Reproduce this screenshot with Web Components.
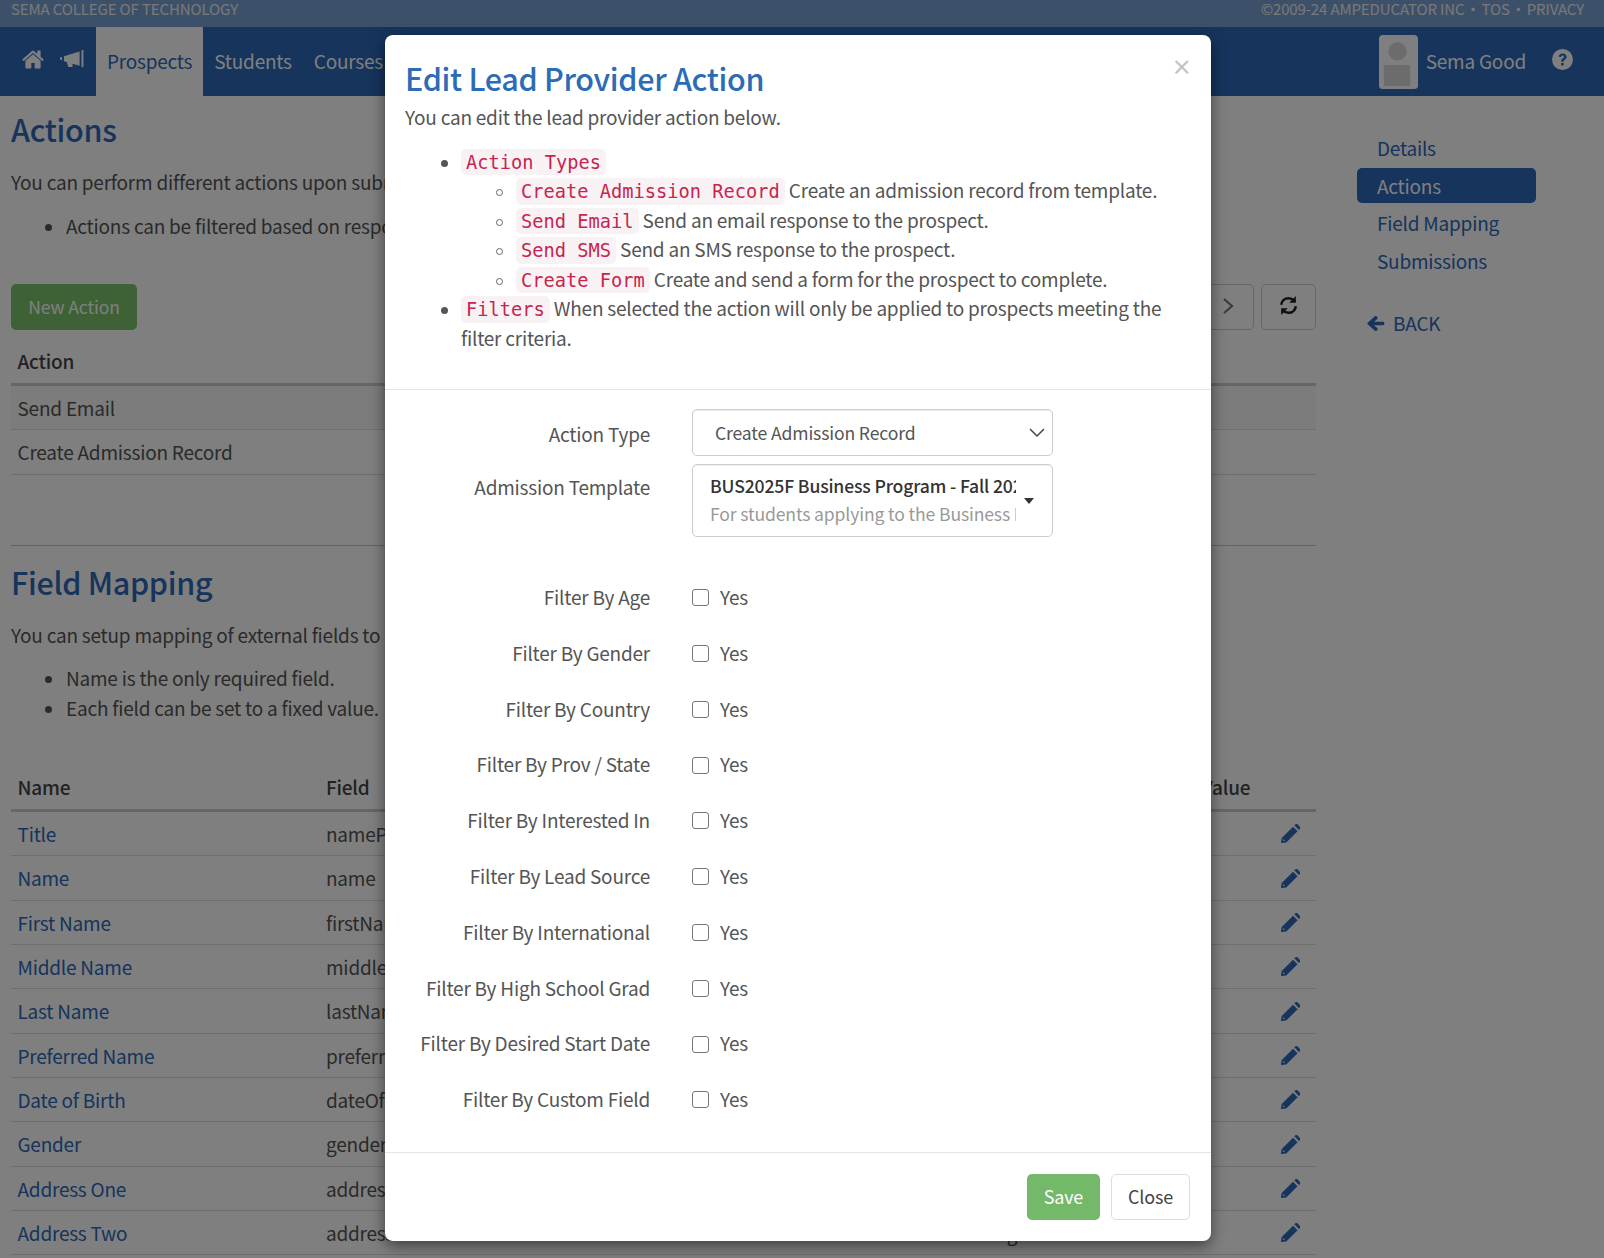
<!DOCTYPE html>
<html><head><meta charset="utf-8">
<style>
html,body{margin:0;padding:0;height:1258px;overflow:hidden;background:#fff}
body{font:400 19px/29.5px "Noto Sans CJK SC","Noto Sans",sans-serif;letter-spacing:-.22px;color:#555;position:relative;width:1604px}
</style></head><body>
<app-shell></app-shell>
<script>
const I={
home:'<svg viewBox="0 0 1664 1792" width="22" height="25" preserveAspectRatio="none" fill="currentColor"><path d="M1408 992v480q0 26-19 45t-45 19H960v-384H704v384H320q-26 0-45-19t-19-45V992q0-1 .5-3t.5-3l575-474 575 474q1 2 1 6zm223-69l-62 74q-8 9-21 11h-3q-13 0-21-7L832 424 140 1001q-12 8-24 7-13-2-21-11l-62-74q-8-10-7-23.5T37 878L756 279q32-26 76-26t76 26l244 204V288q0-14 9-23t23-9h192q14 0 23 9t9 23v408l219 182q10 8 11 21.5t-7 23.5z"/></svg>',
horn:'<svg viewBox="0 0 26 20" width="25" height="19" fill="currentColor"><rect x="0" y="7.500" width="2" height="3"/><path d="M4 6.500 20.500 1.500v15L13 14.600V18H8.500L7 12.500 4 11.800z"/><rect x="22.500" y="0" width="2" height="18"/></svg>',
help:'<svg viewBox="0 0 20 20" width="21" height="21"><circle cx="10" cy="10" r="10" fill="currentColor"/><path d="M6.400 7.400C6.700 5.400 8.200 4.300 10.200 4.300c2.100 0 3.700 1.300 3.700 3.100 0 1.400-.8 2.100-1.800 2.800-.8.600-1.100 1-1.100 1.900H8.800c0-1.500.4-2.200 1.400-3 .8-.6 1.200-1 1.200-1.600 0-.7-.6-1.200-1.300-1.200-.8 0-1.300.5-1.500 1.400z" fill="#2c68b8"/><rect x="8.700" y="13.300" width="2.400" height="2.400" fill="#2c68b8"/></svg>',
pencil:'<svg viewBox="0 0 18 18" width="19" height="19" fill="currentColor"><path d="M.7 13.200 11.400 2.500l4.300 4.300L5 17.500l-4.800.4c-.2 0-.3-.2-.3-.3zM12.600 1.300l.8-.8a1.700 1.700 0 0 1 2.400 0l2 2a1.700 1.700 0 0 1 0 2.400l-.8.800z"/><path d="M2.400 14.200 1.900 16l1.800-.4z" fill="#fff"/></svg>',
back:'<svg viewBox="0 0 20 18" width="18" height="17" fill="currentColor"><path d="M8.700 1 1 8a1.300 1.300 0 0 0 0 2l7.700 7c.6.500 1.400.500 1.900 0l.9-1c.5-.500.500-1.400 0-1.900L7.700 11h10a1.600 1.600 0 0 0 1.600-1.600V8.600A1.600 1.600 0 0 0 17.700 7h-10l3.800-3.100c.5-.5.5-1.400 0-1.900l-.9-1c-.5-.5-1.300-.5-1.900 0z"/></svg>',
refresh:'<svg viewBox="0 0 20 20" width="21" height="21" fill="none" stroke="#1f1f1f" stroke-width="2.400"><path d="M3 9.300C3.500 5.600 6.500 3 10 3c2.100 0 4 .9 5.300 2.400"/><path d="M17 10.700c-.5 3.700-3.500 6.300-7 6.300-2.100 0-4-.9-5.300-2.400"/><path d="M17 1v6.300h-6.300z" fill="#1f1f1f" stroke="none"/><path d="M3 19v-6.300h6.300z" fill="#1f1f1f" stroke="none"/></svg>',
chev:'<svg viewBox="0 0 12 18" width="12" height="18" fill="none" stroke="#777" stroke-width="2.200"><path d="M2 2l8 7-8 7"/></svg>',
avatar:'<svg viewBox="0 0 40 56" width="39" height="54" preserveAspectRatio="none"><rect width="40" height="56" rx="4" fill="#fff"/><circle cx="19" cy="17" r="9.500" fill="#d8d8d8"/><rect x="5" y="31" width="27" height="22" rx="1" fill="#d8d8d8"/></svg>'
};
function def(n,css,html){customElements.define(n,class extends HTMLElement{connectedCallback(){if(this.shadowRoot)return;const r=this.attachShadow({mode:'open'});r.innerHTML='<style>'+css+'</style>'+(typeof html==='function'?html(this):html);}});}

def('top-strip',`:host{display:flex;justify-content:space-between;align-items:center;height:27px;background:#79a3d3;color:#f0f0f0;font-size:15px;letter-spacing:-.13px;line-height:18px;padding:0 20px 9px 11px;box-sizing:border-box;white-space:pre}
i{font-style:normal;display:inline-block;width:17px;text-align:center}`,
`<span>SEMA COLLEGE OF TECHNOLOGY</span><span>©2009-24 AMPEDUCATOR INC<i>·</i>TOS<i>·</i>PRIVACY</span>`);

def('main-nav',`:host{display:flex;align-items:stretch;height:69px;background:#2c68b8;color:#fff}
.ic{display:flex;align-items:center;color:#fff;padding-bottom:4px}
.item{display:flex;align-items:center;padding:0 11px 2px}
.item.on{background:#fff;color:#2c68b8;margin-left:11px}
.left{display:flex;padding-left:22px}
.right{margin-left:auto;display:flex;align-items:center;padding:0 31px 2px 0}
.av{display:flex;margin-right:8px;padding-top:3px}.help{margin-left:26px;display:flex;color:#fff;padding-bottom:3px}
.sp{width:16px}`,
`<div class="left"><span class="ic">${I.home}</span><span class="sp"></span><span class="ic">${I.horn}</span></div>
<div class="item on">Prospects</div><div class="item">Students</div><div class="item">Courses</div>
<div class="right"><span class="av">${I.avatar}</span><span>Sema Good</span><span class="help">${I.help}</span></div>`);

def('data-table',`:host{display:block}
.row{display:grid;grid-template-columns:var(--cols);height:44.33px;box-sizing:border-box;border-bottom:1px solid #ddd;align-items:center;padding:0 6.500px;white-space:nowrap}
.row.h{font-weight:500;color:#444;border-bottom:3px solid #ccc;height:47px}
.row.alt{background:#f9f9f9}
a{color:#2c68b8;text-decoration:none}
.p{color:#2c68b8;justify-self:end;display:flex;padding-right:10px}`,
t=>{const d=JSON.parse(t.getAttribute('data'));return d.map((r,i)=>`<div class="row ${i==0?'h':''} ${t.hasAttribute('alt')&&i==1?'alt':''}">${r.map((c,j)=>{
 if(c==='#')return `<span class="p">${I.pencil}</span>`;
 if(i>0&&j==0&&t.hasAttribute('links'))return `<a>${c}</a>`;return `<span>${c}</span>`}).join('')}</div>`).join('')});

def('side-nav',`:host{display:block;width:179px;margin-left:41px;padding-top:34px}
.l{display:block;color:#2c68b8;height:38px;line-height:35px;padding-left:20px;box-sizing:border-box}
.l.on{background:#2c68b8;color:#fff;border-radius:5px;height:35px;margin-bottom:2px;line-height:35px}
.b{display:flex;align-items:center;gap:8px;color:#2c68b8;margin-top:27px;padding-left:10px;line-height:30px}`,
`<span class="l">Details</span><span class="l on">Actions</span><span class="l">Field Mapping</span><span class="l">Submissions</span>
<div class="b">${I.back}<span>BACK</span></div>`);

def('action-bar',`:host{display:flex;justify-content:space-between;align-items:flex-start;height:46px}
.n{background:#7cc46c;color:#fff;height:46px;width:126px;border-radius:5px;display:flex;align-items:center;justify-content:center;font-size:17.500px;letter-spacing:-.1px}
.r{display:flex;gap:7px}.b{height:46px;border:1px solid #ccc;border-radius:5px;box-sizing:border-box;display:flex;align-items:center;justify-content:center;padding-bottom:3px}`,
`<div class="n">New Action</div><div class="r"><div class="b" style="width:56px;padding-left:4px">${I.chev}</div><div class="b" style="width:55px">${I.refresh}</div></div>`);

def('page-body',`:host{display:flex;padding-left:11px}
.c{width:1305px;flex:none}
h2{margin:0;font-size:30.500px;letter-spacing:-.3px;line-height:40px;font-weight:500;color:#2c68b8}
p{margin:0}ul{margin:0;padding-left:55px}
hr{border:0;border-top:1px solid #b9c9dd;margin:0}`,
`<div class="c">
<h2 style="margin-top:13px">Actions</h2>
<p style="margin-top:18px">You can perform different actions upon submissions.</p>
<ul style="margin-top:14px"><li>Actions can be filtered based on responses.</li></ul>
<action-bar style="margin-top:44px"></action-bar>
<data-table style="margin-top:9px;--cols:1fr" alt data='[["Action"],["Send Email"],["Create Admission Record"]]'></data-table>
<hr style="margin-top:70px">
<h2 style="margin-top:16px">Field Mapping</h2>
<p style="margin-top:18px">You can setup mapping of external fields to</p>
<ul style="margin-top:14px"><li>Name is the only required field.</li><li>Each field can be set to a fixed value.</li></ul>
<data-table style="margin-top:43px;--cols:308.500px 628.500px 247px 1fr" links data='[["Name","Field","","Value"],["Title","namePrefix","","#"],["Name","name","","#"],["First Name","firstName","","#"],["Middle Name","middleName","","#"],["Last Name","lastName","","#"],["Preferred Name","preferredName","","#"],["Date of Birth","dateOfBirth","","#"],["Gender","gender","","#"],["Address One","addressOne","","#"],["Address Two","addressTwo","Mailing","#"]]'></data-table>
</div><side-nav></side-nav>`);

def('help-list',`:host{display:block;color:#555;margin-top:14px}
ul{margin:0;padding-left:56px;list-style:none}ul ul{padding-left:55px}
code{font:18.700px/0 "DejaVu Sans Mono",monospace;letter-spacing:0;color:#c7254e;background:#f9f2f4;border-radius:5px;padding:2.600px 5px}
li{line-height:29.500px}
li::before{content:"";display:inline-block;box-sizing:border-box;width:7px;height:7px;border-radius:50%;background:#555;margin:0 13px 0 -20px;vertical-align:2px}
ul ul li::before{background:none;border:1.300px solid #666}`,
`<ul><li><code>Action Types</code><ul>
<li><code>Create Admission Record</code> Create an admission record from template.</li>
<li><code>Send Email</code> Send an email response to the prospect.</li>
<li><code>Send SMS</code> Send an SMS response to the prospect.</li>
<li><code>Create Form</code> Create and send a form for the prospect to complete.</li></ul></li>
<li><code>Filters</code> When selected the action will only be applied to prospects meeting the filter criteria.</li></ul>`);

def('form-row',`:host{display:grid;grid-template-columns:245px 361px;column-gap:42px;align-items:start}
.l{text-align:right;line-height:27.500px;color:#555}
.b{display:flex;align-items:center;gap:11px;color:#555;min-height:29.500px;line-height:27.500px}
.b span+span{margin-bottom:2px}
.cb{width:17px;height:17px;border:1.500px solid #777;border-radius:3px;box-sizing:border-box;background:#fff}`,
t=>`<div class="l">${t.getAttribute('label')}</div><div class="b"><span class="cb"></span><span>Yes</span></div>`);

def('select-box',`:host{display:block;font-size:17.600px;letter-spacing:-.15px}
.s{border:1px solid #ccc;border-radius:5px;height:47px;box-sizing:border-box;display:flex;align-items:center;justify-content:space-between;padding:0 7px 0 22px;box-shadow:inset 0 1px 1px rgba(0,0,0,.075);color:#555}
.t{border:1px solid #ccc;border-radius:5px;height:73px;box-sizing:border-box;position:relative;padding:7px 0 0 17px;box-shadow:inset 0 1px 1px rgba(0,0,0,.075)}
.t div{width:306px;overflow:hidden;white-space:nowrap;line-height:27.500px}
.a{font-weight:500;color:#333}.d{color:#999}
.c{position:absolute;right:18px;top:33px;width:0;height:0;border:5px solid transparent;border-top:6px solid #333;border-bottom:0}`,
t=>t.hasAttribute('rich')?`<div class="t"><div class="a">BUS2025F Business Program - Fall 2025</div><div class="d">For students applying to the Business Program</div><span class="c"></span></div>`:
`<div class="s"><span>Create Admission Record</span><svg width="16" height="10" viewBox="0 0 16 10" fill="none" stroke="#444" stroke-width="1.500"><path d="M1 1l7 7 7-7"/></svg></div>`);

def('lead-modal',`:host{position:absolute;left:385px;top:35px;width:826px;height:1206px;background:#fff;border-radius:8px;box-shadow:0 5px 15px rgba(0,0,0,.5);display:flex;flex-direction:column;box-sizing:border-box}
.hd{padding:23px 21px 0 20px;position:relative;height:354.500px;box-sizing:border-box;border-bottom:1px solid #e5e5e5}
h1{margin:0;font-size:30.500px;letter-spacing:-.3px;line-height:40px;font-weight:500;color:#2c6bb5}
.x{position:absolute;right:19px;top:15px;font-size:21px;font-weight:700;color:#c4c4c4;line-height:32px}
p{margin:4px 0 0}
.fm{padding:19.500px 0 0 20px;height:763.500px;box-sizing:border-box;border-bottom:1px solid #e5e5e5;display:flex;flex-direction:column}
.top{display:grid;grid-template-columns:245px 361px;column-gap:42px;row-gap:8px;line-height:29.500px;text-align:right}
.rows{display:flex;flex-direction:column;gap:26.300px;margin-top:46px}
.ft{display:flex;justify-content:flex-end;gap:11px;padding:21px 21px 0 0}
.btn{height:46px;border-radius:5px;box-sizing:border-box;display:flex;align-items:center;justify-content:center;font-size:18px}
.sv{background:#74b86a;color:#fff;width:73px}.cl{border:1px solid #ddd;color:#444;width:79px}`,
`<div class="hd"><span class="x">×</span><h1>Edit Lead Provider Action</h1><p>You can edit the lead provider action below.</p><help-list></help-list></div>
<div class="fm">
<div class="top"><span style="padding-top:10px">Action Type</span><select-box style="text-align:left"></select-box><span style="padding-top:8px">Admission Template</span><select-box rich style="text-align:left"></select-box></div>
<div class="rows">${['Age','Gender','Country','Prov / State','Interested In','Lead Source','International','High School Grad','Desired Start Date','Custom Field'].map(x=>`<form-row label="Filter By ${x}"></form-row>`).join('')}</div>
</div>
<div class="ft"><div class="btn sv">Save</div><div class="btn cl">Close</div></div>`);

def('app-shell',`:host{display:block;height:1258px;overflow:hidden;position:relative}
.ov{position:absolute;inset:0;background:rgba(0,0,0,.5)}`,
`<top-strip></top-strip><main-nav></main-nav><page-body></page-body><div class="ov"></div><lead-modal></lead-modal>`);
</script>
</body></html>
